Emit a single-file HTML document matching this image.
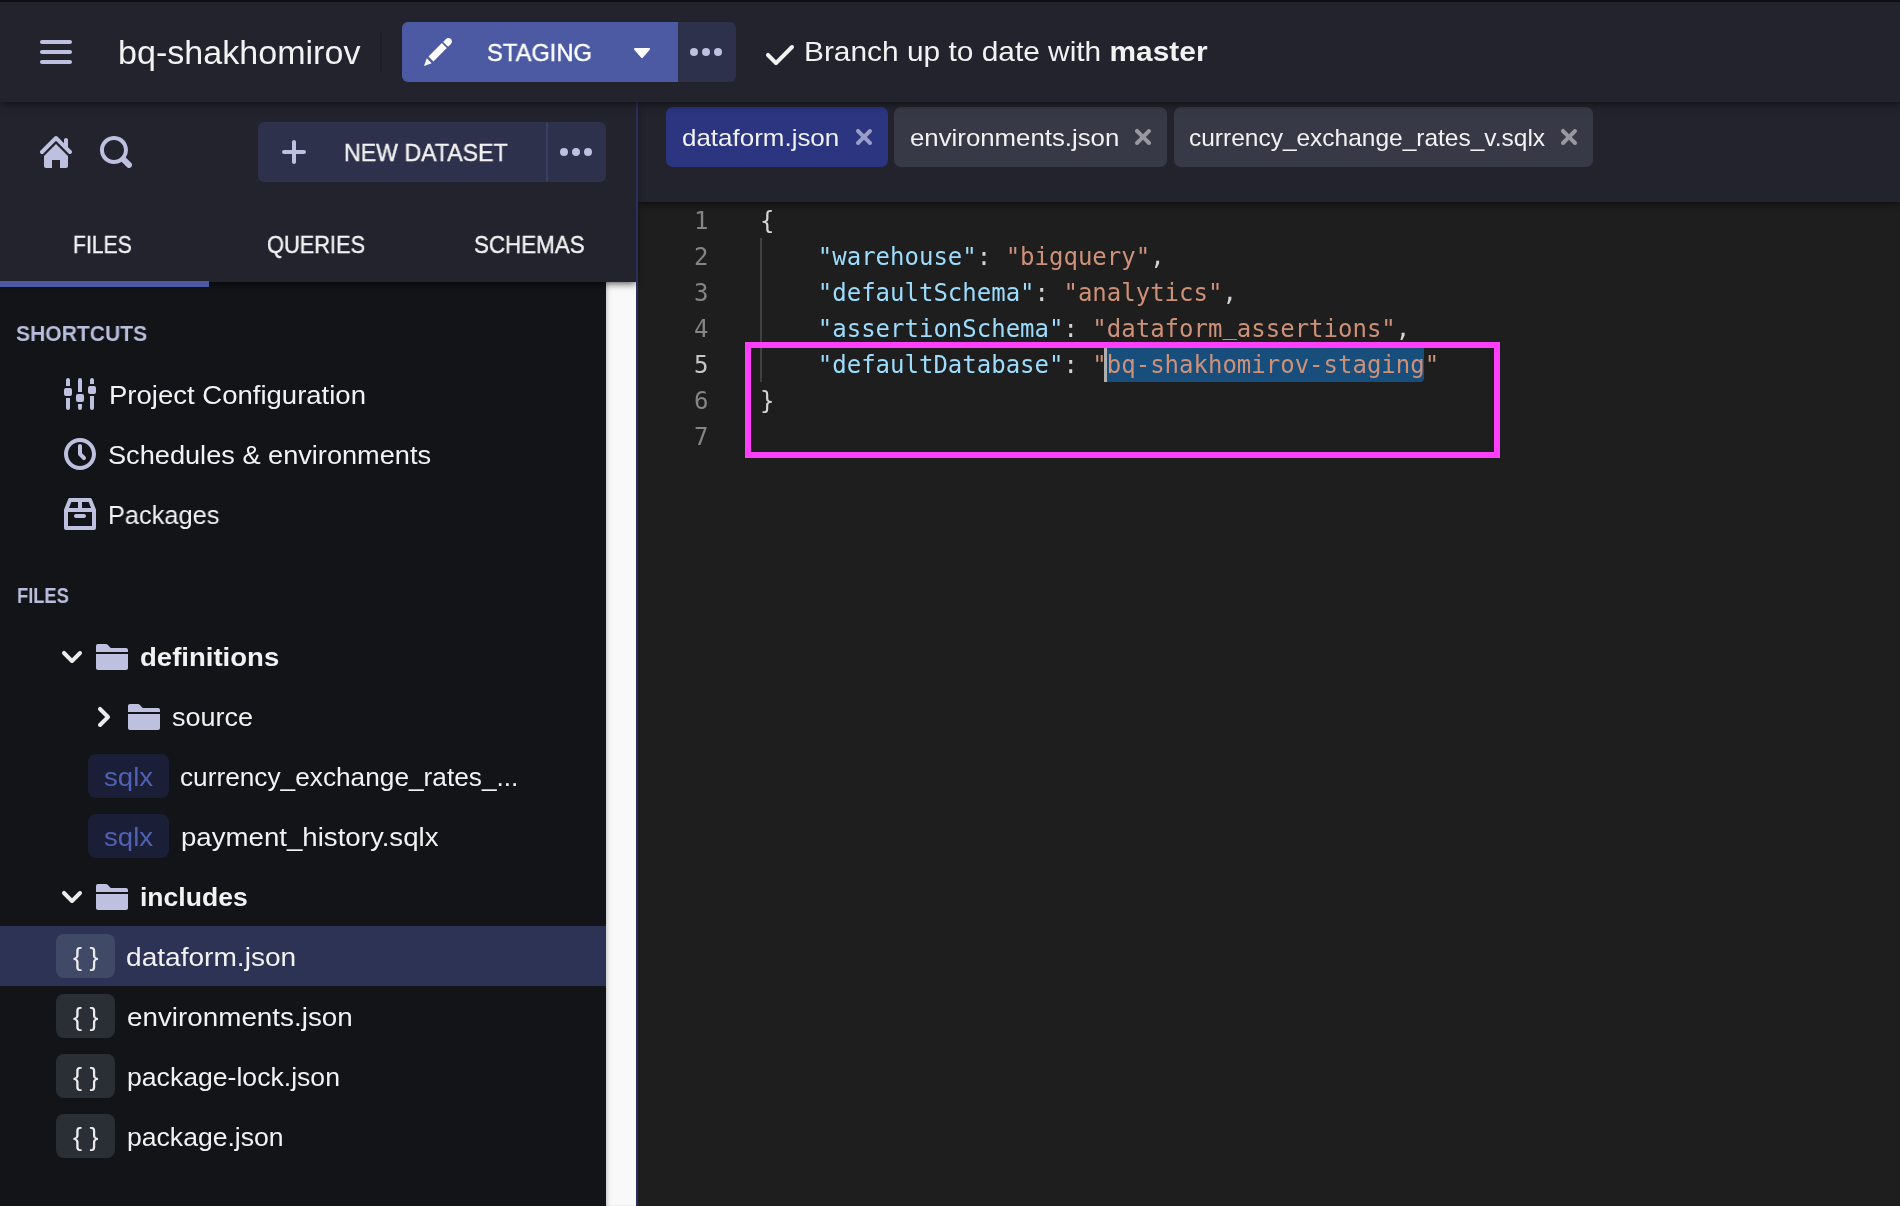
<!DOCTYPE html>
<html><head><meta charset="utf-8"><title>Dataform</title>
<style>
html,body{margin:0;padding:0;background:#1e1e1e;}
body{width:1900px;height:1206px;position:relative;overflow:hidden;font-family:"Liberation Sans",sans-serif;}
.a{position:absolute;display:block}
.t{white-space:pre;line-height:60px;height:60px;transform-origin:0 0;will-change:transform}
.sb{-webkit-text-stroke:0.4px currentColor}
.code{font-family:"DejaVu Sans Mono","Liberation Mono",monospace;font-size:24px;line-height:36px;height:36px;white-space:pre;will-change:transform}
.z6{position:absolute;left:0;top:0;z-index:7}
.z4{position:absolute;left:0;top:0;z-index:4}
.z3{position:absolute;left:0;top:0;z-index:3}
b{font-weight:700}
</style></head><body>
<div class="a" style="left:0;top:0;width:1900px;height:102px;background:#23232e;box-shadow:0 2px 8px rgba(0,0,0,.55);z-index:5"></div>
<div class="a" style="left:0;top:0;width:1900px;height:2px;background:#0f0f13;z-index:6"></div>
<div class="z6">
<svg class="a" style="left:40px;top:36px" width="32" height="32" viewBox="0 0 16 16"><path fill="#bdc0de" fill-rule="evenodd" d="M1 4h14c.55 0 1-.45 1-1s-.45-1-1-1H1c-.55 0-1 .45-1 1s.45 1 1 1zm14 8H1c-.55 0-1 .45-1 1s.45 1 1 1h14c.55 0 1-.45 1-1s-.45-1-1-1zm0-5H1c-.55 0-1 .45-1 1s.45 1 1 1h14c.55 0 1-.45 1-1s-.45-1-1-1z"/></svg>
<span id="title" class="a t" style="left:117.80px;top:23px;font-size:33px;color:#f2f2f2;font-weight:400;transform:scaleX(1.0327);">bq-shakhomirov</span>
<div class="a" style="left:380px;top:32px;width:2px;height:40px;background:#1e1e27"></div>
<div class="a" style="left:402px;top:22px;width:276px;height:60px;background:#4b5aa2;border-radius:6px 0 0 6px"></div>
<div class="a" style="left:678px;top:22px;width:58px;height:60px;background:#2d314c;border-radius:0 6px 6px 0"></div>
<svg class="a" style="left:422px;top:36px" width="32" height="32" viewBox="0 0 16 16"><path fill="#ffffff" fill-rule="evenodd" d="M3.25 10.26l2.47 2.47 6.69-6.69-2.46-2.48-6.7 6.7zM.99 14.99l3.86-1.39-2.46-2.44-1.4 3.83zm12.25-14c-.48 0-.92.2-1.24.51l-1.44 1.44 2.47 2.47 1.44-1.44c.32-.32.51-.75.51-1.24.01-.95-.77-1.74-1.74-1.74z"/></svg>
<span id="staging" class="a t sb" style="left:487.28px;top:23px;font-size:24px;color:#ffffff;font-weight:400;transform:scaleX(0.9877);">STAGING</span>
<svg class="a" style="left:626px;top:36px" width="32" height="32" viewBox="0 0 16 16"><path fill="#ffffff" fill-rule="evenodd" d="M12 6.5c0-.28-.22-.5-.5-.5h-7a.495.495 0 00-.37.83l3.5 4c.09.1.22.17.37.17s.28-.07.37-.17l3.5-4c.08-.09.13-.2.13-.33z"/></svg>
<svg class="a" style="left:690px;top:36px" width="32" height="32" viewBox="0 0 16 16"><g fill="#bdc0de"><circle cx="2" cy="8" r="2"/><circle cx="8" cy="8" r="2"/><circle cx="14" cy="8" r="2"/></g></svg>
<svg class="a" style="left:764px;top:39px" width="32" height="32" viewBox="0 0 16 16"><path fill="#f2f2f2" fill-rule="evenodd" d="M14 3c-.28 0-.53.11-.71.29L6 10.59l-3.29-3.3a1.003 1.003 0 00-1.42 1.42l4 4c.18.18.43.29.71.29s.53-.11.71-.29l8-8A1.003 1.003 0 0014 3z"/></svg>
<span id="branch" class="a t" style="left:804.26px;top:22px;font-size:28px;color:#f2f2f2;font-weight:400;transform:scaleX(1.0668);">Branch up to date with <b>master</b></span>
</div>
<div class="a" style="left:0;top:102px;width:606px;height:1104px;background:#131418"></div>
<div class="a" style="left:606px;top:282px;width:30px;height:924px;background:#f9f9f9;box-shadow:inset 3px 0 4px -2px rgba(0,0,0,.25)"></div>
<div class="a" style="left:0;top:102px;width:636px;height:180px;background:#23232e;box-shadow:0 2px 7px rgba(0,0,0,.6);z-index:3"></div>
<div class="a" style="left:636px;top:102px;width:2px;height:1104px;background:#2c2f5a;z-index:4"></div>
<div class="z4">
<svg class="a" style="left:40px;top:136px" width="32" height="32" viewBox="0 0 16 16"><path fill="#bdc0de" fill-rule="evenodd" d="M2 10v5c0 .55.45 1 1 1h3v-4h4v4h3c.55 0 1-.45 1-1v-5L8 4l-6 6zm13.71-2.71L14 5.59V2c0-.55-.45-1-1-1s-1 .45-1 1v1.59L8.71.29C8.53.11 8.28 0 8 0s-.53.11-.71.29l-7 7a1.003 1.003 0 001.42 1.42L8 2.41l6.29 6.29c.18.19.43.3.71.3a1.003 1.003 0 00.71-1.71z"/></svg>
<svg class="a" style="left:100px;top:136px" width="32" height="32" viewBox="0 0 16 16"><path fill="#bdc0de" fill-rule="evenodd" d="M15.55 13.43l-2.67-2.68a6.94 6.94 0 001.11-3.76c0-3.87-3.13-7-7-7s-7 3.13-7 7 3.13 7 7 7c1.39 0 2.68-.42 3.76-1.11l2.68 2.67a1.498 1.498 0 102.12-2.12zm-8.56-1.44c-2.76 0-5-2.24-5-5s2.24-5 5-5 5 2.24 5 5-2.24 5-5 5z"/></svg>
<div class="a" style="left:258px;top:122px;width:348px;height:60px;background:#2d314c;border-radius:6px"></div>
<div class="a" style="left:546px;top:122px;width:2px;height:60px;background:#3a3d63"></div>
<svg class="a" style="left:278px;top:136px" width="32" height="32" viewBox="0 0 16 16"><path fill="#bdc0de" fill-rule="evenodd" d="M13 7H9V3c0-.55-.45-1-1-1s-1 .45-1 1v4H3c-.55 0-1 .45-1 1s.45 1 1 1h4v4c0 .55.45 1 1 1s1-.45 1-1V9h4c.55 0 1-.45 1-1s-.45-1-1-1z"/></svg>
<span id="newds" class="a t sb" style="left:343.54px;top:123px;font-size:24px;color:#f2f2f2;font-weight:400;transform:scaleX(0.9646);">NEW DATASET</span>
<svg class="a" style="left:560px;top:136px" width="32" height="32" viewBox="0 0 16 16"><g fill="#bdc0de"><circle cx="2" cy="8" r="2"/><circle cx="8" cy="8" r="2"/><circle cx="14" cy="8" r="2"/></g></svg>
<span id="tabF" class="a t sb" style="left:73.12px;top:215px;font-size:24px;color:#f2f2f2;font-weight:400;transform:scaleX(0.8802);">FILES</span>
<span id="tabQ" class="a t sb" style="left:267.00px;top:215px;font-size:24px;color:#f2f2f2;font-weight:400;transform:scaleX(0.9084);">QUERIES</span>
<span id="tabS" class="a t sb" style="left:474.30px;top:215px;font-size:24px;color:#f2f2f2;font-weight:400;transform:scaleX(0.9316);">SCHEMAS</span>
<div class="a" style="left:0;top:281px;width:209px;height:6px;background:#4b5aa2"></div>
</div>
<span id="lblS" class="a t" style="left:16.10px;top:304px;font-size:22px;color:#b9bddc;font-weight:700;transform:scaleX(0.9577);">SHORTCUTS</span>
<svg class="a" style="left:64px;top:378px" width="32" height="32" viewBox="0 0 16 16"><g fill="#bdc0de"><path d="M1 1a1 1 0 012 0v3H1zM1 10h2v5a1 1 0 01-2 0zM7 1a1 1 0 012 0v6H7zM7 13h2v2a1 1 0 01-2 0zM13 1a1 1 0 012 0v2h-2zM13 9h2v6a1 1 0 01-2 0z"/><rect x="0" y="5" width="4" height="4" rx="1"/><rect x="6" y="8" width="4" height="4" rx="1"/><rect x="12" y="4" width="4" height="4" rx="1"/></g></svg>
<span id="sc1" class="a t" style="left:108.62px;top:365px;font-size:26px;color:#f2f2f2;font-weight:400;transform:scaleX(1.0584);">Project Configuration</span>
<svg class="a" style="left:64px;top:438px" width="32" height="32" viewBox="0 0 16 16"><path fill="#bdc0de" fill-rule="evenodd" d="M8 0C3.58 0 0 3.58 0 8s3.58 8 8 8 8-3.58 8-8-3.58-8-8-8zm0 14c-3.31 0-6-2.69-6-6s2.69-6 6-6 6 2.69 6 6-2.69 6-6 6zm1-6.41V4c0-.55-.45-1-1-1s-1 .45-1 1v4c0 .28.11.53.29.71l2 2a1.003 1.003 0 001.42-1.42L9 7.59z"/></svg>
<span id="sc2" class="a t" style="left:108.48px;top:425px;font-size:26px;color:#f2f2f2;font-weight:400;transform:scaleX(1.0446);">Schedules &amp; environments</span>
<svg class="a" style="left:64px;top:498px" width="32" height="32" viewBox="0 0 16 16"><path fill="#bdc0de" fill-rule="evenodd" d="M6 10h4c.55 0 1-.45 1-1s-.45-1-1-1H6c-.55 0-1 .45-1 1s.45 1 1 1zm9.93-4.37v-.02L13.940.63C13.780.26 13.420 0 13 0H3c-.42 0-.78.26-.93.63L.08 5.61l-.01.02C.03 5.740 0 5.870 0 6v9c0 .55.45 1 1 1h14c.55 0 1-.45 1-1V6c0-.13-.03-.26-.07-.37zM9 2h3.320l1.200 3H9V2zM3.680 2H7v3H2.480l1.200-3zM14 14H2V7h12v7z"/></svg>
<span id="sc3" class="a t" style="left:107.86px;top:485px;font-size:26px;color:#f2f2f2;font-weight:400;transform:scaleX(0.9757);">Packages</span>
<span id="lblF" class="a t" style="left:16.64px;top:566px;font-size:22px;color:#b9bddc;font-weight:700;transform:scaleX(0.8305);">FILES</span>
<svg class="a" style="left:56px;top:641px" width="32" height="32" viewBox="0 0 16 16"><path fill="#ececec" fill-rule="evenodd" d="M12 5c-.28 0-.53.11-.71.29L8 8.59l-3.29-3.3a1.003 1.003 0 00-1.42 1.42l4 4c.18.18.43.29.71.29s.53-.11.71-.29l4-4A1.003 1.003 0 0012 5z"/></svg>
<svg class="a" style="left:96px;top:640px" width="32" height="32" viewBox="0 0 16 16"><path fill="#bdc0de" fill-rule="evenodd" d="M0 14c0 .55.45 1 1 1h14c.55 0 1-.45 1-1V7H0v7zm15-10H7.410L5.700 2.300a.965.965 0 00-.71-.3H1c-.55 0-1 .45-1 1v3h16V5c0-.55-.45-1-1-1z"/></svg>
<span id="f1" class="a t" style="left:140.40px;top:627px;font-size:26px;color:#f2f2f2;font-weight:700;transform:scaleX(1.0593);">definitions</span>
<svg class="a" style="left:88px;top:701px" width="32" height="32" viewBox="0 0 16 16"><path fill="#ececec" fill-rule="evenodd" d="M10.71 7.29l-4-4a1.003 1.003 0 00-1.42 1.42L8.59 8 5.3 11.29c-.19.18-.3.43-.3.71a1.003 1.003 0 001.71.71l4-4c.18-.18.29-.43.29-.71 0-.28-.11-.53-.29-.71z"/></svg>
<svg class="a" style="left:128px;top:700px" width="32" height="32" viewBox="0 0 16 16"><path fill="#bdc0de" fill-rule="evenodd" d="M0 14c0 .55.45 1 1 1h14c.55 0 1-.45 1-1V7H0v7zm15-10H7.410L5.700 2.300a.965.965 0 00-.71-.3H1c-.55 0-1 .45-1 1v3h16V5c0-.55-.45-1-1-1z"/></svg>
<span id="f2" class="a t" style="left:171.84px;top:687px;font-size:26px;color:#f2f2f2;font-weight:400;transform:scaleX(1.0379);">source</span>
<div class="a" style="left:88px;top:754px;width:81px;height:44px;background:#1a1f37;border-radius:8px"></div>
<span id="sq0" class="a t" style="left:103.60px;top:747px;font-size:26px;color:#5061b4;font-weight:400;transform:scaleX(1.0609);">sqlx</span>
<span id="f3" class="a t" style="left:180.40px;top:747px;font-size:26px;color:#f2f2f2;font-weight:400;transform:scaleX(1.0091);">currency_exchange_rates_...</span>
<div class="a" style="left:88px;top:814px;width:81px;height:44px;background:#1a1f37;border-radius:8px"></div>
<span id="sq1" class="a t" style="left:103.60px;top:807px;font-size:26px;color:#5061b4;font-weight:400;transform:scaleX(1.0609);">sqlx</span>
<span id="f4" class="a t" style="left:180.56px;top:807px;font-size:26px;color:#f2f2f2;font-weight:400;transform:scaleX(1.0627);">payment_history.sqlx</span>
<svg class="a" style="left:56px;top:881px" width="32" height="32" viewBox="0 0 16 16"><path fill="#ececec" fill-rule="evenodd" d="M12 5c-.28 0-.53.11-.71.29L8 8.59l-3.29-3.3a1.003 1.003 0 00-1.42 1.42l4 4c.18.18.43.29.71.29s.53-.11.71-.29l4-4A1.003 1.003 0 0012 5z"/></svg>
<svg class="a" style="left:96px;top:880px" width="32" height="32" viewBox="0 0 16 16"><path fill="#bdc0de" fill-rule="evenodd" d="M0 14c0 .55.45 1 1 1h14c.55 0 1-.45 1-1V7H0v7zm15-10H7.410L5.700 2.300a.965.965 0 00-.71-.3H1c-.55 0-1 .45-1 1v3h16V5c0-.55-.45-1-1-1z"/></svg>
<span id="f5" class="a t" style="left:140.30px;top:867px;font-size:26px;color:#f2f2f2;font-weight:700;transform:scaleX(1.0209);">includes</span>
<div class="a" style="left:0;top:926px;width:606px;height:60px;background:#2d3354"></div>
<div class="a" style="left:56px;top:934px;width:59px;height:44px;background:#404966;border-radius:8px"></div>
<span id="br0" class="a t" style="left:72.74px;top:927px;font-size:26px;color:#ececec;font-weight:400;transform:scaleX(1.0389);">{ }</span>
<span id="f6" class="a t" style="left:125.69px;top:927px;font-size:26px;color:#f2f2f2;font-weight:400;transform:scaleX(1.0806);">dataform.json</span>
<div class="a" style="left:56px;top:994px;width:59px;height:44px;background:#2a2e35;border-radius:8px"></div>
<span id="br1" class="a t" style="left:72.74px;top:987px;font-size:26px;color:#ececec;font-weight:400;transform:scaleX(1.0389);">{ }</span>
<span id="f7" class="a t" style="left:126.66px;top:987px;font-size:26px;color:#f2f2f2;font-weight:400;transform:scaleX(1.0698);">environments.json</span>
<div class="a" style="left:56px;top:1054px;width:59px;height:44px;background:#2a2e35;border-radius:8px"></div>
<span id="br2" class="a t" style="left:72.74px;top:1047px;font-size:26px;color:#ececec;font-weight:400;transform:scaleX(1.0389);">{ }</span>
<span id="f8" class="a t" style="left:127.22px;top:1047px;font-size:26px;color:#f2f2f2;font-weight:400;transform:scaleX(1.0232);">package-lock.json</span>
<div class="a" style="left:56px;top:1114px;width:59px;height:44px;background:#2a2e35;border-radius:8px"></div>
<span id="br3" class="a t" style="left:72.74px;top:1107px;font-size:26px;color:#ececec;font-weight:400;transform:scaleX(1.0389);">{ }</span>
<span id="f9" class="a t" style="left:127.22px;top:1107px;font-size:26px;color:#f2f2f2;font-weight:400;transform:scaleX(1.0221);">package.json</span>
<div class="a" style="left:638px;top:102px;width:1262px;height:1104px;background:#1e1e1e"></div>
<div class="a" style="left:638px;top:102px;width:1262px;height:100px;background:#23232e;box-shadow:0 2px 7px rgba(0,0,0,.6);z-index:2"></div>
<div class="z3">
<div class="a" style="left:666px;top:107px;width:222px;height:60px;background:#2b3580;border-radius:7px"></div>
<span id="t1" class="a t" style="left:682.30px;top:108px;font-size:24px;color:#f2f2f2;font-weight:400;transform:scaleX(1.0814);">dataform.json</span>
<svg class="a" style="left:848px;top:121px" width="32" height="32" viewBox="0 0 16 16"><path fill="#999dc8" fill-rule="evenodd" d="M9.41 8l2.29-2.29c.19-.18.3-.43.3-.71a1.003 1.003 0 00-1.71-.71L8 6.59l-2.29-2.3a1.003 1.003 0 00-1.42 1.42L6.59 8 4.3 10.29c-.19.18-.3.43-.3.71a1.003 1.003 0 001.71.71L8 9.41l2.29 2.29c.18.19.43.3.71.3a1.003 1.003 0 00.71-1.71L9.41 8z"/></svg>
<div class="a" style="left:894px;top:107px;width:272.5px;height:60px;background:#373a46;border-radius:7px"></div>
<span id="t2" class="a t" style="left:909.80px;top:108px;font-size:24px;color:#f2f2f2;font-weight:400;transform:scaleX(1.0744);">environments.json</span>
<svg class="a" style="left:1127px;top:121px" width="32" height="32" viewBox="0 0 16 16"><path fill="#98999f" fill-rule="evenodd" d="M9.41 8l2.29-2.29c.19-.18.3-.43.3-.71a1.003 1.003 0 00-1.71-.71L8 6.59l-2.29-2.3a1.003 1.003 0 00-1.42 1.42L6.59 8 4.3 10.29c-.19.18-.3.43-.3.71a1.003 1.003 0 001.71.71L8 9.41l2.29 2.29c.18.19.43.3.71.3a1.003 1.003 0 00.71-1.71L9.41 8z"/></svg>
<div class="a" style="left:1173.5px;top:107px;width:419px;height:60px;background:#373a46;border-radius:7px"></div>
<span id="t3" class="a t" style="left:1188.50px;top:108px;font-size:24px;color:#f2f2f2;font-weight:400;transform:scaleX(1.0201);">currency_exchange_rates_v.sqlx</span>
<svg class="a" style="left:1553px;top:121px" width="32" height="32" viewBox="0 0 16 16"><path fill="#98999f" fill-rule="evenodd" d="M9.41 8l2.29-2.29c.19-.18.3-.43.3-.71a1.003 1.003 0 00-1.71-.71L8 6.59l-2.29-2.3a1.003 1.003 0 00-1.42 1.42L6.59 8 4.3 10.29c-.19.18-.3.43-.3.71a1.003 1.003 0 001.71.71L8 9.41l2.29 2.29c.18.19.43.3.71.3a1.003 1.003 0 00.71-1.71L9.41 8z"/></svg>
</div>
<div class="a" style="left:760px;top:238px;width:2px;height:144px;background:#404040"></div>
<div class="a" style="left:1107px;top:346px;width:317px;height:36px;background:#174e7c;border-radius:0 0 4px 0"></div>
<div class="a code" style="left:660px;top:203px;width:48.5px;text-align:right;color:#858585">1</div>
<div class="a code" id="L1" style="left:760px;top:203px;color:#d4d4d4">{</div>
<div class="a code" style="left:660px;top:239px;width:48.5px;text-align:right;color:#858585">2</div>
<div class="a code" id="L2" style="left:760px;top:239px;color:#d4d4d4">    <span style="color:#9cdcfe">"warehouse"</span>: <span style="color:#ce9178">"bigquery"</span>,</div>
<div class="a code" style="left:660px;top:275px;width:48.5px;text-align:right;color:#858585">3</div>
<div class="a code" id="L3" style="left:760px;top:275px;color:#d4d4d4">    <span style="color:#9cdcfe">"defaultSchema"</span>: <span style="color:#ce9178">"analytics"</span>,</div>
<div class="a code" style="left:660px;top:311px;width:48.5px;text-align:right;color:#858585">4</div>
<div class="a code" id="L4" style="left:760px;top:311px;color:#d4d4d4">    <span style="color:#9cdcfe">"assertionSchema"</span>: <span style="color:#ce9178">"dataform<span style="position:relative;top:-3px">_</span>assertions"</span>,</div>
<div class="a code" style="left:660px;top:347px;width:48.5px;text-align:right;color:#c6c6c6">5</div>
<div class="a code" id="L5" style="left:760px;top:347px;color:#d4d4d4">    <span style="color:#9cdcfe">"defaultDatabase"</span>: <span style="color:#ce9178">"</span><span id="sel" style="color:#ce9178">bq-shakhomirov-staging</span><span style="color:#ce9178">"</span></div>
<div class="a code" style="left:660px;top:383px;width:48.5px;text-align:right;color:#858585">6</div>
<div class="a code" id="L6" style="left:760px;top:383px;color:#d4d4d4">}</div>
<div class="a code" style="left:660px;top:419px;width:48.5px;text-align:right;color:#858585">7</div>
<div class="a code" id="L7" style="left:760px;top:419px;color:#d4d4d4"></div>
<div class="a" style="left:1104px;top:348px;width:3px;height:34px;background:#aeafad"></div>
<div class="a" style="left:745px;top:342px;width:755px;height:116px;border:6px solid #ff40fb;box-sizing:border-box"></div>
</body></html>
